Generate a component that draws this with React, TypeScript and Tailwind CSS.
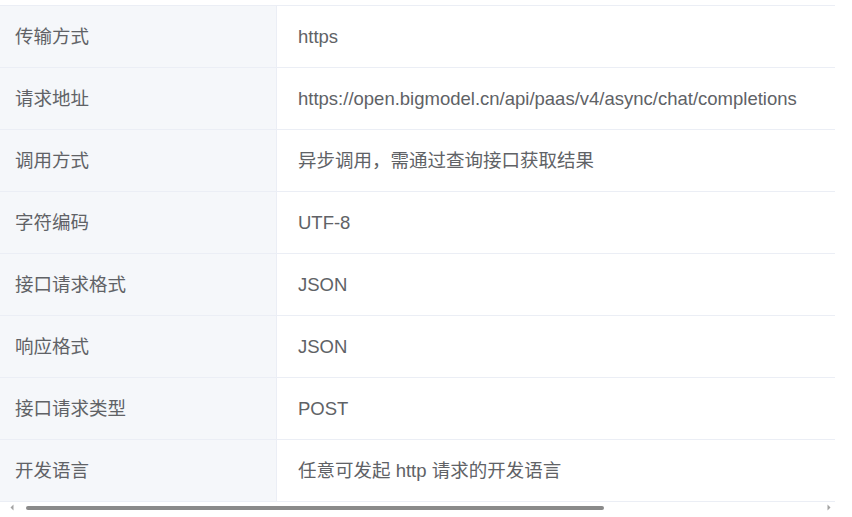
import React from "react";

interface Row {
  label: string;
  value: string;
}

const rows: Row[] = [
  { label: "传输方式", value: "https" },
  { label: "请求地址", value: "https://open.bigmodel.cn/api/paas/v4/async/chat/completions" },
  { label: "调用方式", value: "异步调用，需通过查询接口获取结果" },
  { label: "字符编码", value: "UTF-8" },
  { label: "接口请求格式", value: "JSON" },
  { label: "响应格式", value: "JSON" },
  { label: "接口请求类型", value: "POST" },
  { label: "开发语言", value: "任意可发起 http 请求的开发语言" },
];

export default function App() {
  return (
    <div
      className="w-[852px] h-[517px] bg-white overflow-hidden pt-[5px] text-[#606266] text-[18.5px]"
      style={{ fontFamily: '"Liberation Sans", Arial, "Noto Sans CJK SC", sans-serif' }}
    >
      {/* Table */}
      <div className="w-[835px] overflow-hidden border-b border-[#ebeef5]">
        {rows.map((row, i) => (
          <div
            key={i}
            className={`grid grid-cols-[277px_1fr] h-[62px] ${i === 0 ? "border-t border-[#ebeef5]" : ""}`}
          >
            <div
              className={`bg-[#f5f7fa] border-r border-[#ebeef5] flex items-center pl-[15px] ${
                i > 0 ? "border-t border-[#ebeef5]" : ""
              }`}
            >
              {row.label}
            </div>
            <div
              className={`flex items-center pl-[21px] whitespace-nowrap ${
                i > 0 ? "border-t border-[#ebeef5]" : ""
              }`}
            >
              {row.value}
            </div>
          </div>
        ))}
      </div>

      {/* Scrollbar */}
      <div className="relative w-[852px] h-[15px]">
        <div className="absolute left-[9px] top-[4px] w-0 h-0 border-l-[3px] border-r-[3px] border-b-[3px] border-l-transparent border-r-transparent border-b-[#a3a3a3] -rotate-90" />
        <div className="absolute left-[26px] top-[4px] w-[578px] h-[4px] rounded-full bg-[#8a8a8a]" />
        <div className="absolute left-[826px] top-[4px] w-0 h-0 border-l-[3px] border-r-[3px] border-b-[3px] border-l-transparent border-r-transparent border-b-[#a3a3a3] rotate-90" />
      </div>
    </div>
  );
}
